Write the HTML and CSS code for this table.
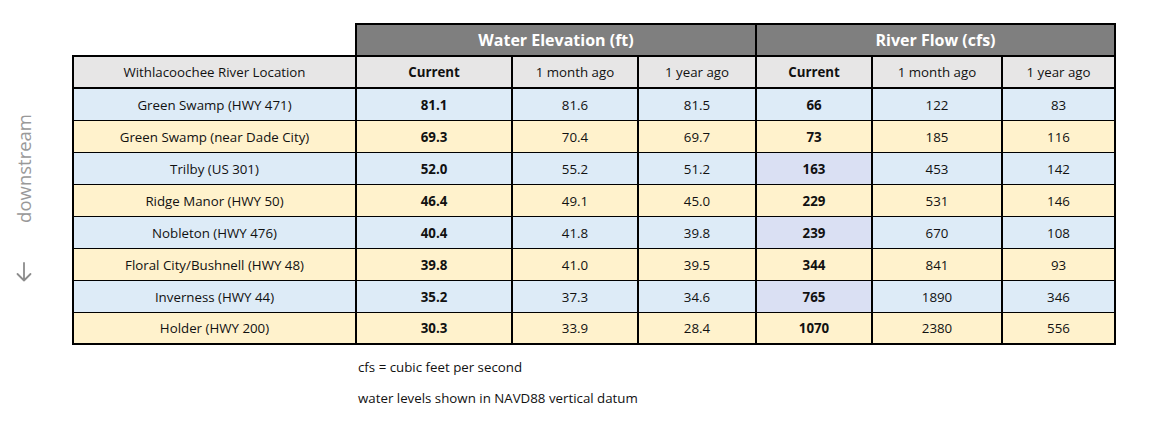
FILE: index.html
```html
<!DOCTYPE html>
<html>
<head>
<meta charset="utf-8">
<link rel="stylesheet" href="styles.css">
</head>
<body>
<div class="page">
  <aside class="side">
    <div class="side-label">downstream</div>
    <svg class="side-arrow" width="16" height="20" viewBox="0 0 16 20" aria-hidden="true">
      <path d="M8 1 V18.5 M1.5 12 L8 18.5 L14.5 12" fill="none" stroke="#8c8c8c" stroke-width="1.8" stroke-linecap="round" stroke-linejoin="round"/>
    </svg>
  </aside>
  <main class="main">
    <table class="data">
      <colgroup>
        <col class="c-loc"><col class="c-cur"><col class="c-m1"><col class="c-y1"><col class="c-cur2"><col class="c-m2"><col class="c-y2">
      </colgroup>
      <thead>
        <tr class="group-row">
          <th class="blank"></th>
          <th class="group" colspan="3">Water Elevation (ft)</th>
          <th class="group" colspan="3">River Flow (cfs)</th>
        </tr>
        <tr class="head-row">
          <th class="loc-head">Withlacoochee River Location</th>
          <th class="bold">Current</th>
          <th>1 month ago</th>
          <th>1 year ago</th>
          <th class="bold">Current</th>
          <th>1 month ago</th>
          <th>1 year ago</th>
        </tr>
      </thead>
      <tbody>
        <tr class="blue"><td>Green Swamp (HWY 471)</td><td class="bold">81.1</td><td>81.6</td><td>81.5</td><td class="bold">66</td><td>122</td><td>83</td></tr>
        <tr class="yellow"><td>Green Swamp (near Dade City)</td><td class="bold">69.3</td><td>70.4</td><td>69.7</td><td class="bold">73</td><td>185</td><td>116</td></tr>
        <tr class="blue"><td>Trilby (US 301)</td><td class="bold">52.0</td><td>55.2</td><td>51.2</td><td class="bold hl">163</td><td>453</td><td>142</td></tr>
        <tr class="yellow"><td>Ridge Manor (HWY 50)</td><td class="bold">46.4</td><td>49.1</td><td>45.0</td><td class="bold">229</td><td>531</td><td>146</td></tr>
        <tr class="blue"><td>Nobleton (HWY 476)</td><td class="bold">40.4</td><td>41.8</td><td>39.8</td><td class="bold hl">239</td><td>670</td><td>108</td></tr>
        <tr class="yellow"><td>Floral City/Bushnell (HWY 48)</td><td class="bold">39.8</td><td>41.0</td><td>39.5</td><td class="bold">344</td><td>841</td><td>93</td></tr>
        <tr class="blue"><td>Inverness (HWY 44)</td><td class="bold">35.2</td><td>37.3</td><td>34.6</td><td class="bold hl">765</td><td>1890</td><td>346</td></tr>
        <tr class="yellow"><td>Holder (HWY 200)</td><td class="bold">30.3</td><td>33.9</td><td>28.4</td><td class="bold">1070</td><td>2380</td><td>556</td></tr>
      </tbody>
    </table>
    <div class="notes">
      <p>cfs = cubic feet per second</p>
      <p>water levels shown in NAVD88 vertical datum</p>
    </div>
  </main>
</div>
</body>
</html>
```

FILE: styles.css
```css
html, body {
  margin: 0;
  padding: 0;
  background: #ffffff;
}
body {
  font-family: "Open Sans", "Liberation Sans", sans-serif;
  font-size: 13.3px;
  color: #111;
}
.page {
  display: flex;
  padding-top: 23px;
}
.side {
  width: 48px;
  display: flex;
  flex-direction: column;
  align-items: center;
  padding-top: 91px;
}
.side-label {
  writing-mode: vertical-rl;
  transform: rotate(180deg);
  color: #999999;
  font-size: 18.5px;
  line-height: 20px;
}
.side-arrow {
  display: block;
  margin-top: 39px;
}
.main {
  margin-left: 24px;
  display: flex;
  flex-direction: column;
}
.data {
  border-collapse: collapse;
  table-layout: fixed;
  width: 1042px;
}
.c-loc { width: 283px; }
.c-cur { width: 156px; }
.c-m1 { width: 126px; }
.c-y1 { width: 118px; }
.c-cur2 { width: 116px; }
.c-m2 { width: 130px; }
.c-y2 { width: 113px; }

.data th, .data td {
  text-align: center;
  padding: 0;
  font-weight: normal;
  border-left: 2px solid #000;
  border-right: 2px solid #000;
  border-top: 1px solid #000;
  border-bottom: 1px solid #000;
  white-space: nowrap;
}
.data th.blank {
  border: none;
  background: #fff;
}
.group-row th.group {
  height: 30px;
  background: #7f7f7f;
  color: #ffffff;
  font-weight: bold;
  font-size: 16px;
  border: 2px solid #000;
}
.head-row th {
  height: 30px;
  background: #e7e6e6;
  border-top: 2px solid #000;
  border-bottom: 2px solid #000;
}
.data tbody td {
  height: 31px;
}
.data tbody tr:last-child td {
  height: 30px;
  border-bottom: 2px solid #000;
}
.data tr.blue td { background: #ddebf7; }
.data tr.yellow td { background: #fff2cc; }
.data tr.blue td.hl { background: #dae0f3; }
.data .bold { font-weight: bold; }

.notes {
  margin-left: 286px;
  margin-top: 13px;
}
.notes p {
  margin: 0 0 13px 0;
  line-height: 18px;
  color: #111;
}
```
